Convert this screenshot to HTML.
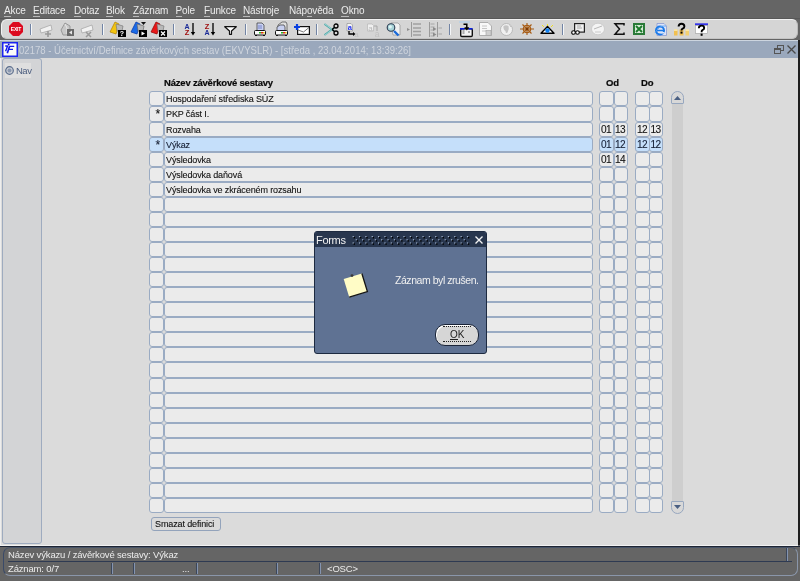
<!DOCTYPE html>
<html><head><meta charset="utf-8"><style>
*{box-sizing:border-box;margin:0;padding:0}
html,body{width:800px;height:581px;overflow:hidden;background:#656565;font-family:"Liberation Sans",sans-serif}
body{position:relative}
#root{position:absolute;left:0;top:0;width:800px;height:581px;will-change:transform}
.a{position:absolute}
.ic{position:absolute;overflow:visible}
.mn{position:absolute;top:5px;font-size:10px;color:#ececec;white-space:nowrap;line-height:12px;letter-spacing:-0.15px}
.mn u{text-decoration:none;border-bottom:1px solid #b8b8b8;display:inline-block;line-height:10px}
#toolbar{position:absolute;left:1px;top:19px;width:797px;height:20px;background:#d5d5d5;border-radius:6px;border:1px solid #f2f2f2;border-right-color:#bcbcbc;border-bottom-color:#c4c4c4}
#win{position:absolute;left:0;top:40px;width:798px;height:505px;background:#dbdbdb;border-top:1px solid #cdd5df;border-left:1px solid #eeeeee}
#title{position:absolute;left:-1px;top:0;width:798px;height:17px;background:#9aa8bc}
#title .t{position:absolute;left:19px;top:2.5px;font-size:10.5px;color:#cfd5de;white-space:nowrap;line-height:12px;transform:scaleX(0.91);transform-origin:0 0}
#nav{position:absolute;left:2px;top:58px;width:40px;height:486px;background:#d3d4d6;border:1px solid #9eabbf;border-radius:3px}
.f{position:absolute;background:#ebebeb;border:1px solid #9aabc3;border-radius:3px}
.f.s{background:#c5dffa}
.tx{position:absolute;font-size:9px;color:#111;white-space:nowrap;line-height:11px;letter-spacing:-0.12px;-webkit-text-stroke:0.1px #111}
.tx.s{color:#16223c}
.dg{font-size:10.1px;letter-spacing:-0.6px}
.hd{position:absolute;font-size:9.5px;font-weight:bold;color:#0a0a0a;white-space:nowrap;line-height:11px;letter-spacing:-0.2px;-webkit-text-stroke:0.2px #0a0a0a}
.st{position:absolute;font-size:9.5px;color:#ececec;white-space:nowrap;line-height:11px;letter-spacing:-0.16px}
.vs{position:absolute;top:563px;width:2px;height:11px;background:#8494b0;border-left:1px solid #3b465a}
</style></head><body><div id="root">
<div class="mn" style="left:4px"><u>A</u>kce</div>
<div class="mn" style="left:33px"><u>E</u>ditace</div>
<div class="mn" style="left:74px"><u>D</u>otaz</div>
<div class="mn" style="left:106px"><u>B</u>lok</div>
<div class="mn" style="left:133px"><u>Z</u>áznam</div>
<div class="mn" style="left:175.5px"><u>P</u>ole</div>
<div class="mn" style="left:204px"><u>F</u>unkce</div>
<div class="mn" style="left:243px"><u>N</u>ástroje</div>
<div class="mn" style="left:289px">Náp<u>o</u>věda</div>
<div class="mn" style="left:341px"><u>O</u>kno</div>
<div class="a" style="left:0;top:18px;width:800px;height:1px;background:#585858"></div><div id="toolbar"></div>
<svg class="ic" style="left:9px;top:22px" width="14" height="14" viewBox="0 0 14 14"><polygon points="4,0 10,0 14,4 14,10 10,14 4,14 0,10 0,4" fill="#dc0a1e"/><text x="7" y="9.2" font-family="Liberation Sans" font-weight="bold" font-size="5" fill="#fff" text-anchor="middle" letter-spacing="-0.2">EXIT</text></svg>
<svg class="ic" style="left:30px;top:24px" width="2" height="11" viewBox="0 0 2 11"><rect x="0" y="0" width="1" height="11" fill="#7284a4"/><rect x="1" y="0" width="1" height="11" fill="#f4f6f8"/></svg>
<svg class="ic" style="left:39px;top:24px" width="14" height="13" viewBox="0 0 14 13"><path d="M1,5 L12,1 L13,6 L2,9 Z" fill="#f2f2f2" stroke="#a8a8a8" stroke-width="0.8"/><path d="M9,7 v6 M6,10 h6" stroke="#9a9a9a" stroke-width="1.6"/></svg>
<svg class="ic" style="left:60px;top:22px" width="14" height="14" viewBox="0 0 14 14"><path d="M1,8 L5,1 L10,4 L10,13 L3,13 Z" fill="#c8c8c8" stroke="#8a8a8a" stroke-width="0.8"/><path d="M5,2 L7,6 V12" stroke="#f0f0f0" stroke-width="0.8" fill="none"/><rect x="7" y="7" width="7" height="7" fill="#6a6a6a"/><path d="M12,8.5 L9,10.5 L12,12.5Z" fill="#e8e8e8"/></svg>
<svg class="ic" style="left:80px;top:24px" width="14" height="13" viewBox="0 0 14 13"><path d="M1,5 L12,1 L13,6 L2,9 Z" fill="#f2f2f2" stroke="#a8a8a8" stroke-width="0.8"/><path d="M6,8 l5,5 M11,8 l-5,5" stroke="#9a9a9a" stroke-width="1.5"/></svg>
<svg class="ic" style="left:102px;top:24px" width="2" height="11" viewBox="0 0 2 11"><rect x="0" y="0" width="1" height="11" fill="#7284a4"/><rect x="1" y="0" width="1" height="11" fill="#f4f6f8"/></svg>
<svg class="ic" style="left:110px;top:22px" width="16" height="15" viewBox="0 0 16 15"><path d="M0,10 L5,0 L9,2 L6,12 Z" fill="#f2c410" stroke="#b08000" stroke-width="0.7"/><path d="M6,2 L13,4 L12,9 L7,9Z" fill="#b8b8b8" stroke="#707070" stroke-width="0.6"/><rect x="8" y="8" width="8" height="7" fill="#000"/><text x="12" y="14.3" font-family="Liberation Sans" font-weight="bold" font-size="7" fill="#fff" text-anchor="middle">?</text></svg>
<svg class="ic" style="left:131px;top:22px" width="16" height="15" viewBox="0 0 16 15"><path d="M0,10 L5,0 L9,2 L6,12 Z" fill="#1a6ae8" stroke="#0030a0" stroke-width="0.7"/><path d="M6,2 L13,4 L12,9 L7,9Z" fill="#b8b8b8" stroke="#606060" stroke-width="0.6"/><path d="M10,0 h5 l-2.5,3z" fill="#111"/><rect x="8" y="8" width="8" height="7" fill="#000"/><path d="M10.5,9.5 L14,11.5 L10.5,13.5Z" fill="#fff"/></svg>
<svg class="ic" style="left:151px;top:22px" width="16" height="15" viewBox="0 0 16 15"><path d="M0,10 L5,0 L9,2 L6,12 Z" fill="#e81818" stroke="#900000" stroke-width="0.7"/><path d="M6,2 L13,4 L12,9 L7,9Z" fill="#b8b8b8" stroke="#707070" stroke-width="0.6"/><rect x="8" y="8" width="8" height="7" fill="#000"/><path d="M10,9.5 l4,4 M14,9.5 l-4,4" stroke="#fff" stroke-width="1.2"/></svg>
<svg class="ic" style="left:173px;top:24px" width="2" height="11" viewBox="0 0 2 11"><rect x="0" y="0" width="1" height="11" fill="#7284a4"/><rect x="1" y="0" width="1" height="11" fill="#f4f6f8"/></svg>
<svg class="ic" style="left:184px;top:23px" width="11" height="13" viewBox="0 0 11 13"><text x="3" y="5.6" font-family="Liberation Sans" font-weight="bold" font-size="7" fill="#1a2a98" text-anchor="middle">A</text><text x="3" y="12.2" font-family="Liberation Sans" font-weight="bold" font-size="7.5" fill="#a01010" text-anchor="middle">Z</text><path d="M9,0 V10" stroke="#000" stroke-width="1.3"/><path d="M6.8,9 L11.2,9 L9,12.5Z" fill="#000"/></svg>
<svg class="ic" style="left:204px;top:23px" width="11" height="13" viewBox="0 0 11 13"><text x="3" y="5.6" font-family="Liberation Sans" font-weight="bold" font-size="7.5" fill="#a01010" text-anchor="middle">Z</text><text x="3" y="12.2" font-family="Liberation Sans" font-weight="bold" font-size="7" fill="#1a2a98" text-anchor="middle">A</text><path d="M9,0 V10" stroke="#000" stroke-width="1.3"/><path d="M6.8,9 L11.2,9 L9,12.5Z" fill="#000"/></svg>
<svg class="ic" style="left:224px;top:26px" width="13" height="9" viewBox="0 0 13 9"><path d="M0.7,0.7 H12.3 L7.5,5 V8.3 H5.5 V5 Z" fill="#fff" stroke="#111" stroke-width="1.2" stroke-linejoin="round"/></svg>
<svg class="ic" style="left:245px;top:24px" width="2" height="11" viewBox="0 0 2 11"><rect x="0" y="0" width="1" height="11" fill="#7284a4"/><rect x="1" y="0" width="1" height="11" fill="#f4f6f8"/></svg>
<svg class="ic" style="left:254px;top:23px" width="12" height="13" viewBox="0 0 12 13"><path d="M3,0 H8 L10,2 V8 H3Z" fill="#c8d0f0" stroke="#333" stroke-width="0.7"/><path d="M4,3h4M4,5h4" stroke="#6070c0" stroke-width="0.8"/><rect x="0.5" y="7.5" width="11" height="4.5" rx="1" fill="#fafafa" stroke="#111" stroke-width="1"/><rect x="5" y="9" width="2" height="1.5" fill="#20c020"/><rect x="7" y="9" width="2" height="1.5" fill="#e02020"/><rect x="9" y="9" width="1.5" height="1.5" fill="#e0c000"/><rect x="1" y="12" width="2" height="1" fill="#111"/><rect x="9" y="12" width="2" height="1" fill="#111"/></svg>
<svg class="ic" style="left:275px;top:22px" width="13" height="14" viewBox="0 0 13 14"><path d="M3,3 L7,0 H11 L12,2 V9 H3Z" fill="#e0e0e0" stroke="#444" stroke-width="0.7"/><path d="M2,5 L5,3 H9 L10,5 V9 H2Z" fill="#c8d0f0" stroke="#333" stroke-width="0.7"/><rect x="0.5" y="8.5" width="12" height="4.5" rx="1" fill="#fafafa" stroke="#111" stroke-width="1"/><rect x="6" y="10" width="2" height="1.5" fill="#20c020"/><rect x="8" y="10" width="2" height="1.5" fill="#e02020"/><rect x="10" y="10" width="1.5" height="1.5" fill="#e0c000"/><rect x="1" y="13" width="2" height="1" fill="#111"/><rect x="10" y="13" width="2" height="1" fill="#111"/></svg>
<svg class="ic" style="left:294px;top:24px" width="16" height="11" viewBox="0 0 16 11"><rect x="3.6" y="2.6" width="11.8" height="7.8" fill="#fff" stroke="#111" stroke-width="1.2"/><path d="M4,6 L9.5,8 L15,3.5" stroke="#555" stroke-width="0.8" fill="none"/><path d="M3,0 V6 M0,3 H6" stroke="#0a40e0" stroke-width="2.2"/></svg>
<svg class="ic" style="left:316px;top:24px" width="2" height="11" viewBox="0 0 2 11"><rect x="0" y="0" width="1" height="11" fill="#7284a4"/><rect x="1" y="0" width="1" height="11" fill="#f4f6f8"/></svg>
<svg class="ic" style="left:324px;top:23px" width="15" height="13" viewBox="0 0 15 13"><path d="M0.5,1 L10,8 M0.5,12 L10,5" stroke="#4aa8a8" stroke-width="1.6"/><path d="M1,1 L9,7 M1,12 L9,6" stroke="#d8f0f0" stroke-width="0.6"/><circle cx="12" cy="3" r="2" fill="none" stroke="#000" stroke-width="1.3"/><circle cx="12" cy="10" r="2" fill="none" stroke="#000" stroke-width="1.3"/><path d="M8,6.5 L10.5,4.5 M8,6.5 L10.5,8.5" stroke="#000" stroke-width="1.3"/></svg>
<svg class="ic" style="left:346px;top:23px" width="13" height="14" viewBox="0 0 13 14"><path d="M1,0.5 H5 L6.5,2 V8 H1Z" fill="#f4f4f4" stroke="#888" stroke-width="0.6"/><text x="3.8" y="7.2" font-family="Liberation Sans" font-weight="bold" font-size="7.5" fill="#2030f0" text-anchor="middle">a</text><path d="M3,8 V11 H7" stroke="#000" stroke-width="1.4" fill="none"/><path d="M7,9 L9.5,11 L7,13Z" fill="#000"/><text x="10.5" y="13.8" font-family="Liberation Sans" font-size="8" fill="#c0c0c0" text-anchor="middle">a</text></svg>
<svg class="ic" style="left:367px;top:23px" width="13" height="14" viewBox="0 0 13 14"><path d="M0.5,1 H5 L6.5,2.5 V8 H0.5Z" fill="#f0f0f0" stroke="#b0b0b0" stroke-width="0.6"/><text x="3.5" y="7.5" font-family="Liberation Sans" font-size="8" fill="#b8b8b8" text-anchor="middle">a</text><path d="M7,3 H10 V8" stroke="#a8a8a8" stroke-width="1" fill="none"/><text x="10" y="14" font-family="Liberation Sans" font-size="8.5" fill="#c0c0c0" text-anchor="middle">a</text></svg>
<svg class="ic" style="left:386px;top:22px" width="15" height="15" viewBox="0 0 15 15"><path d="M5,1 H12 L14,3 V13 H7Z" fill="#f0f0f0" stroke="#909090" stroke-width="0.7"/><path d="M8,9 L12.5,13.5" stroke="#1a6ad8" stroke-width="2.4"/><circle cx="5" cy="5.5" r="3.8" fill="#a8d4d8" stroke="#2a3a50" stroke-width="1.1"/><circle cx="4.3" cy="4.8" r="1.6" fill="#e0f4f4"/></svg>
<svg class="ic" style="left:407px;top:22px" width="14" height="15" viewBox="0 0 14 15"><path d="M4.5,0 V15" stroke="#9a9a9a" stroke-width="1"/><path d="M6,2h8 M6,6h8 M6,9.5h8 M6,13h8" stroke="#a0a0a0" stroke-width="1.4"/><path d="M0,6 L3,7.5 L0,9Z" fill="#909090"/></svg>
<svg class="ic" style="left:428px;top:22px" width="14" height="15" viewBox="0 0 14 15"><path d="M1.5,0 V15 M9.5,0 V15" stroke="#9a9a9a" stroke-width="1"/><path d="M2.5,2h4 M2.5,5h4 M2.5,8h4 M2.5,11h4 M2.5,14h4 M10.5,6h3.5 M10.5,12h3.5" stroke="#a8a8a8" stroke-width="1.2"/><path d="M5,5 L8.5,7 L5,9Z M5,10.5 L8.5,12.5 L5,14.5Z" fill="#8c8c8c"/></svg>
<svg class="ic" style="left:449px;top:24px" width="2" height="11" viewBox="0 0 2 11"><rect x="0" y="0" width="1" height="11" fill="#7284a4"/><rect x="1" y="0" width="1" height="11" fill="#f4f6f8"/></svg>
<svg class="ic" style="left:459px;top:21px" width="14" height="16" viewBox="0 0 14 16"><rect x="0" y="0.5" width="11" height="1" fill="#a8d0f0"/><rect x="1.7" y="7.7" width="11.6" height="7.8" rx="1.2" fill="#f4f4f4" stroke="#111" stroke-width="1.4"/><rect x="1" y="7" width="4.5" height="1.6" fill="#0a20e0"/><rect x="9.5" y="7" width="4" height="1.6" fill="#0a20e0"/><path d="M3.5,10 h2 M3.5,12 h2 M9,11 h2" stroke="#555" stroke-width="0.9"/><path d="M4.5,3.2 H7.8 V7" stroke="#000" stroke-width="1.5" fill="none"/><path d="M5.3,6.3 L10.3,6.3 L7.8,9.5Z" fill="#000"/></svg>
<svg class="ic" style="left:479px;top:22px" width="13" height="14" viewBox="0 0 13 14"><path d="M0.5,0.5 H9 L12.5,4 V13.5 H0.5Z" fill="#f8f8f8" stroke="#a8a8a8" stroke-width="0.9"/><path d="M3,4h5 M3,6.5h5 M3,9h4" stroke="#c0c0c0" stroke-width="0.9"/><rect x="7" y="8.5" width="5" height="5" fill="#d0d0d0" stroke="#a0a0a0" stroke-width="0.6"/></svg>
<svg class="ic" style="left:500px;top:23px" width="13" height="13" viewBox="0 0 13 13"><circle cx="6.5" cy="6.5" r="6" fill="#f0f0f0" stroke="#b0b0b0" stroke-width="0.8"/><path d="M3.5,3 Q6,1.5 8.5,3 Q9.5,6 7.5,9.5 Q5.5,11 5.5,8 Q3,6.5 3.5,3Z" fill="#c4c4c4"/><path d="M9.5,2.5 L11,4" stroke="#c4c4c4" stroke-width="1"/></svg>
<svg class="ic" style="left:520px;top:23px" width="14" height="12" viewBox="0 0 14 12"><circle cx="7" cy="6" r="3.6" fill="none" stroke="#a85c14" stroke-width="1.4"/><path d="M0,6 H14 M7,0 V12 M2.5,1.5 L11.5,10.5 M11.5,1.5 L2.5,10.5" stroke="#a85c14" stroke-width="1.1"/><circle cx="7" cy="6" r="1.2" fill="#7a3a08"/></svg>
<svg class="ic" style="left:540px;top:24px" width="15" height="10" viewBox="0 0 15 10"><path d="M2,1 L4,3 M7.5,0 V2 M13,1 L11,3" stroke="#f0e020" stroke-width="1"/><path d="M1,9.2 L7.5,2.5 L14,9.2Z" fill="#fff" stroke="#000" stroke-width="1.4" stroke-linejoin="round"/><circle cx="7.5" cy="6.5" r="2.2" fill="#1080f0"/></svg>
<svg class="ic" style="left:562px;top:24px" width="2" height="11" viewBox="0 0 2 11"><rect x="0" y="0" width="1" height="11" fill="#7284a4"/><rect x="1" y="0" width="1" height="11" fill="#f4f6f8"/></svg>
<svg class="ic" style="left:571px;top:23px" width="14" height="12" viewBox="0 0 14 12"><rect x="3.6" y="0.6" width="9.8" height="8.5" fill="#f0f0f0" stroke="#222" stroke-width="1.2"/><path d="M6,3h4 M6,5h5" stroke="#999" stroke-width="0.8"/><circle cx="2.5" cy="9.5" r="1.8" fill="#fff" stroke="#000" stroke-width="1.1"/><circle cx="6.5" cy="9.5" r="1.8" fill="#fff" stroke="#000" stroke-width="1.1"/></svg>
<svg class="ic" style="left:591px;top:23px" width="14" height="12" viewBox="0 0 14 12"><ellipse cx="7" cy="6" rx="6.5" ry="5.8" fill="#f4f4f4" stroke="#c8c8c8" stroke-width="0.8"/><path d="M3,6 L11,3" stroke="#b8b8b8" stroke-width="1"/><path d="M4,9h6" stroke="#c0c0c0" stroke-width="0.8"/></svg>
<svg class="ic" style="left:614px;top:23px" width="11" height="12" viewBox="0 0 11 12"><path d="M10,2.5 V0.8 H1 L5.5,6 L1,11.2 H10 V9.5" fill="none" stroke="#111" stroke-width="1.5" stroke-linejoin="miter"/></svg>
<svg class="ic" style="left:633px;top:23px" width="12" height="12" viewBox="0 0 12 12"><rect x="0" y="0" width="12" height="12" fill="#2a7a38"/><rect x="2" y="2" width="8" height="8" fill="#d8ecd8"/><path d="M3,3 L9,9 M9,3 L3,9" stroke="#1a7a2a" stroke-width="1.8"/></svg>
<svg class="ic" style="left:654px;top:23px" width="13" height="13" viewBox="0 0 13 13"><path d="M3,0.5 H10 L12.5,3 V12.5 H3Z" fill="#dde4f8" stroke="#8a9ad0" stroke-width="0.8"/><circle cx="6" cy="7.5" r="4" fill="none" stroke="#1a7ae8" stroke-width="2"/><path d="M2.5,7.5 H9.5" stroke="#1a7ae8" stroke-width="1.5"/><path d="M6.5,9.8 H10.5" stroke="#dde4f8" stroke-width="1.6"/><path d="M1,10 Q5,2 12,3" fill="none" stroke="#5aa0f0" stroke-width="0.9"/></svg>
<svg class="ic" style="left:674px;top:23px" width="15" height="13" viewBox="0 0 15 13"><rect x="0" y="6.5" width="3.5" height="6" fill="#f2c050"/><rect x="0" y="6.5" width="3.5" height="1.2" fill="#fff4c0"/><rect x="5.5" y="6.5" width="4" height="6" fill="#f2c050"/><rect x="11.5" y="6.5" width="3.5" height="6" fill="#f4d070"/><rect x="11.5" y="6.5" width="3.5" height="1.2" fill="#fff4c0"/><path d="M4.6,3.6 Q4.6,0.8 7.5,0.8 Q10.4,0.8 10.4,3.4 Q10.4,5 8.3,5.8 Q7.5,6.2 7.5,7.6" fill="none" stroke="#000" stroke-width="1.9"/><rect x="6.5" y="8.6" width="2" height="2" fill="#000"/></svg>
<svg class="ic" style="left:695px;top:23px" width="13" height="14" viewBox="0 0 13 14"><rect x="0" y="0.3" width="13" height="2.2" fill="#3434e8"/><rect x="0.5" y="2.5" width="12" height="7.8" fill="#fff" stroke="#a0a0a0" stroke-width="0.6"/><path d="M3.8,5.2 Q3.8,2.6 6.5,2.6 Q9.2,2.6 9.2,5 Q9.2,6.4 7.4,7.2 Q6.6,7.6 6.6,9.2" fill="none" stroke="#000" stroke-width="1.9"/><rect x="5.6" y="10.6" width="2" height="2.2" fill="#000"/></svg>
<div id="win"><div id="title"><div class="t">02178 - Účetnictví/Definice závěrkových sestav (EKVYSLR) - [středa , 23.04.2014; 13:39:26]</div></div></div>
<svg class="ic" style="left:2px;top:42px" width="16" height="15" viewBox="0 0 16 15"><rect x="0.75" y="0.75" width="14.5" height="13.5" fill="#fbfbf8" stroke="#1c24f0" stroke-width="1.5"/><circle cx="6.7" cy="2.5" r="0.9" fill="#0a10c0"/><path d="M3.2,4 H5.6 L3.6,9.2" fill="none" stroke="#1018f0" stroke-width="1.4" stroke-linejoin="round"/><path d="M7.6,4.3 L5.3,11.3" stroke="#1018f0" stroke-width="1.7"/><path d="M7.2,4.3 H12.2 M6.6,7.4 H11" stroke="#1018f0" stroke-width="1.3"/></svg>
<svg class="ic" style="left:774px;top:45px" width="10" height="9" viewBox="0 0 10 9"><rect x="3.5" y="0.5" width="6" height="5" fill="none" stroke="#555" stroke-width="1"/><rect x="0.5" y="3.5" width="6" height="5" fill="#9dabbf" stroke="#555" stroke-width="1"/><rect x="0.5" y="3.5" width="6" height="1.5" fill="#555"/></svg><svg class="ic" style="left:787px;top:45px" width="9" height="9" viewBox="0 0 9 9"><path d="M0.5,0.5 L8.5,8.5 M8.5,0.5 L0.5,8.5" stroke="#4a4a4a" stroke-width="1.3"/></svg>
<div class="a" style="left:798px;top:40px;width:2px;height:505px;background:#1e1e1e"></div>
<div id="nav"></div>
<div class="a" style="left:5px;top:63px;width:26px;height:15px;background:#dfdfdf"></div><svg class="ic" style="left:5px;top:66px" width="9" height="9" viewBox="0 0 9 9"><circle cx="4.5" cy="4.5" r="3.8" fill="#c8ccd4" stroke="#5a6d8c" stroke-width="1.2"/><circle cx="4.5" cy="4.5" r="2" fill="#8a98b0"/></svg><div class="a" style="left:16px;top:65px;font-size:9.5px;color:#4a5c7e;line-height:11px;letter-spacing:-0.5px">Nav</div>
<div class="hd" style="left:164px;top:76.5px">Název závěrkové sestavy</div>
<div class="hd" style="left:606px;top:76.5px">Od</div>
<div class="hd" style="left:641px;top:76.5px">Do</div>
<div class="f" style="left:149px;top:91px;width:15px;height:15px"></div><div class="f" style="left:164px;top:91px;width:429px;height:15px"></div><div class="f" style="left:599px;top:91px;width:15px;height:15px"></div><div class="f" style="left:614px;top:91px;width:14px;height:15px"></div><div class="f" style="left:635px;top:91px;width:15px;height:15px"></div><div class="f" style="left:649px;top:91px;width:14px;height:15px"></div>
<div class="tx" style="left:166px;top:94px">Hospodaření střediska SÚZ</div>
<div class="f" style="left:149px;top:106px;width:15px;height:16px"></div><div class="f" style="left:164px;top:106px;width:429px;height:16px"></div><div class="f" style="left:599px;top:106px;width:15px;height:16px"></div><div class="f" style="left:614px;top:106px;width:14px;height:16px"></div><div class="f" style="left:635px;top:106px;width:15px;height:16px"></div><div class="f" style="left:649px;top:106px;width:14px;height:16px"></div>
<div class="tx" style="left:166px;top:109px">PKP část I.</div><div class="tx" style="left:155.5px;top:107.5px;font-size:12px;line-height:12px">*</div>
<div class="f" style="left:149px;top:122px;width:15px;height:15px"></div><div class="f" style="left:164px;top:122px;width:429px;height:15px"></div><div class="f" style="left:599px;top:122px;width:15px;height:15px"></div><div class="f" style="left:614px;top:122px;width:14px;height:15px"></div><div class="f" style="left:635px;top:122px;width:15px;height:15px"></div><div class="f" style="left:649px;top:122px;width:14px;height:15px"></div>
<div class="tx" style="left:166px;top:125px">Rozvaha</div><div class="tx dg" style="left:601px;top:124px">01</div><div class="tx dg" style="left:615px;top:124px">13</div><div class="tx dg" style="left:637px;top:124px">12</div><div class="tx dg" style="left:650.5px;top:124px">13</div>
<div class="f s" style="left:149px;top:137px;width:15px;height:15px"></div><div class="f s" style="left:164px;top:137px;width:429px;height:15px"></div><div class="f s" style="left:599px;top:137px;width:15px;height:15px"></div><div class="f s" style="left:614px;top:137px;width:14px;height:15px"></div><div class="f s" style="left:635px;top:137px;width:15px;height:15px"></div><div class="f s" style="left:649px;top:137px;width:14px;height:15px"></div>
<div class="tx s" style="left:166px;top:140px">Výkaz</div><div class="tx s" style="left:155.5px;top:138.5px;font-size:12px;line-height:12px">*</div><div class="tx s dg" style="left:601px;top:139px">01</div><div class="tx s dg" style="left:615px;top:139px">12</div><div class="tx s dg" style="left:637px;top:139px">12</div><div class="tx s dg" style="left:650.5px;top:139px">12</div>
<div class="f" style="left:149px;top:152px;width:15px;height:15px"></div><div class="f" style="left:164px;top:152px;width:429px;height:15px"></div><div class="f" style="left:599px;top:152px;width:15px;height:15px"></div><div class="f" style="left:614px;top:152px;width:14px;height:15px"></div><div class="f" style="left:635px;top:152px;width:15px;height:15px"></div><div class="f" style="left:649px;top:152px;width:14px;height:15px"></div>
<div class="tx" style="left:166px;top:155px">Výsledovka</div><div class="tx dg" style="left:601px;top:154px">01</div><div class="tx dg" style="left:615px;top:154px">14</div>
<div class="f" style="left:149px;top:167px;width:15px;height:15px"></div><div class="f" style="left:164px;top:167px;width:429px;height:15px"></div><div class="f" style="left:599px;top:167px;width:15px;height:15px"></div><div class="f" style="left:614px;top:167px;width:14px;height:15px"></div><div class="f" style="left:635px;top:167px;width:15px;height:15px"></div><div class="f" style="left:649px;top:167px;width:14px;height:15px"></div>
<div class="tx" style="left:166px;top:170px">Výsledovka daňová</div>
<div class="f" style="left:149px;top:182px;width:15px;height:15px"></div><div class="f" style="left:164px;top:182px;width:429px;height:15px"></div><div class="f" style="left:599px;top:182px;width:15px;height:15px"></div><div class="f" style="left:614px;top:182px;width:14px;height:15px"></div><div class="f" style="left:635px;top:182px;width:15px;height:15px"></div><div class="f" style="left:649px;top:182px;width:14px;height:15px"></div>
<div class="tx" style="left:166px;top:185px">Výsledovka ve zkráceném rozsahu</div>
<div class="f" style="left:149px;top:197px;width:15px;height:15px"></div><div class="f" style="left:164px;top:197px;width:429px;height:15px"></div><div class="f" style="left:599px;top:197px;width:15px;height:15px"></div><div class="f" style="left:614px;top:197px;width:14px;height:15px"></div><div class="f" style="left:635px;top:197px;width:15px;height:15px"></div><div class="f" style="left:649px;top:197px;width:14px;height:15px"></div>

<div class="f" style="left:149px;top:212px;width:15px;height:15px"></div><div class="f" style="left:164px;top:212px;width:429px;height:15px"></div><div class="f" style="left:599px;top:212px;width:15px;height:15px"></div><div class="f" style="left:614px;top:212px;width:14px;height:15px"></div><div class="f" style="left:635px;top:212px;width:15px;height:15px"></div><div class="f" style="left:649px;top:212px;width:14px;height:15px"></div>

<div class="f" style="left:149px;top:227px;width:15px;height:15px"></div><div class="f" style="left:164px;top:227px;width:429px;height:15px"></div><div class="f" style="left:599px;top:227px;width:15px;height:15px"></div><div class="f" style="left:614px;top:227px;width:14px;height:15px"></div><div class="f" style="left:635px;top:227px;width:15px;height:15px"></div><div class="f" style="left:649px;top:227px;width:14px;height:15px"></div>

<div class="f" style="left:149px;top:242px;width:15px;height:15px"></div><div class="f" style="left:164px;top:242px;width:429px;height:15px"></div><div class="f" style="left:599px;top:242px;width:15px;height:15px"></div><div class="f" style="left:614px;top:242px;width:14px;height:15px"></div><div class="f" style="left:635px;top:242px;width:15px;height:15px"></div><div class="f" style="left:649px;top:242px;width:14px;height:15px"></div>

<div class="f" style="left:149px;top:257px;width:15px;height:15px"></div><div class="f" style="left:164px;top:257px;width:429px;height:15px"></div><div class="f" style="left:599px;top:257px;width:15px;height:15px"></div><div class="f" style="left:614px;top:257px;width:14px;height:15px"></div><div class="f" style="left:635px;top:257px;width:15px;height:15px"></div><div class="f" style="left:649px;top:257px;width:14px;height:15px"></div>

<div class="f" style="left:149px;top:272px;width:15px;height:15px"></div><div class="f" style="left:164px;top:272px;width:429px;height:15px"></div><div class="f" style="left:599px;top:272px;width:15px;height:15px"></div><div class="f" style="left:614px;top:272px;width:14px;height:15px"></div><div class="f" style="left:635px;top:272px;width:15px;height:15px"></div><div class="f" style="left:649px;top:272px;width:14px;height:15px"></div>

<div class="f" style="left:149px;top:287px;width:15px;height:15px"></div><div class="f" style="left:164px;top:287px;width:429px;height:15px"></div><div class="f" style="left:599px;top:287px;width:15px;height:15px"></div><div class="f" style="left:614px;top:287px;width:14px;height:15px"></div><div class="f" style="left:635px;top:287px;width:15px;height:15px"></div><div class="f" style="left:649px;top:287px;width:14px;height:15px"></div>

<div class="f" style="left:149px;top:302px;width:15px;height:15px"></div><div class="f" style="left:164px;top:302px;width:429px;height:15px"></div><div class="f" style="left:599px;top:302px;width:15px;height:15px"></div><div class="f" style="left:614px;top:302px;width:14px;height:15px"></div><div class="f" style="left:635px;top:302px;width:15px;height:15px"></div><div class="f" style="left:649px;top:302px;width:14px;height:15px"></div>

<div class="f" style="left:149px;top:317px;width:15px;height:15px"></div><div class="f" style="left:164px;top:317px;width:429px;height:15px"></div><div class="f" style="left:599px;top:317px;width:15px;height:15px"></div><div class="f" style="left:614px;top:317px;width:14px;height:15px"></div><div class="f" style="left:635px;top:317px;width:15px;height:15px"></div><div class="f" style="left:649px;top:317px;width:14px;height:15px"></div>

<div class="f" style="left:149px;top:332px;width:15px;height:15px"></div><div class="f" style="left:164px;top:332px;width:429px;height:15px"></div><div class="f" style="left:599px;top:332px;width:15px;height:15px"></div><div class="f" style="left:614px;top:332px;width:14px;height:15px"></div><div class="f" style="left:635px;top:332px;width:15px;height:15px"></div><div class="f" style="left:649px;top:332px;width:14px;height:15px"></div>

<div class="f" style="left:149px;top:347px;width:15px;height:15px"></div><div class="f" style="left:164px;top:347px;width:429px;height:15px"></div><div class="f" style="left:599px;top:347px;width:15px;height:15px"></div><div class="f" style="left:614px;top:347px;width:14px;height:15px"></div><div class="f" style="left:635px;top:347px;width:15px;height:15px"></div><div class="f" style="left:649px;top:347px;width:14px;height:15px"></div>

<div class="f" style="left:149px;top:362px;width:15px;height:16px"></div><div class="f" style="left:164px;top:362px;width:429px;height:16px"></div><div class="f" style="left:599px;top:362px;width:15px;height:16px"></div><div class="f" style="left:614px;top:362px;width:14px;height:16px"></div><div class="f" style="left:635px;top:362px;width:15px;height:16px"></div><div class="f" style="left:649px;top:362px;width:14px;height:16px"></div>

<div class="f" style="left:149px;top:378px;width:15px;height:15px"></div><div class="f" style="left:164px;top:378px;width:429px;height:15px"></div><div class="f" style="left:599px;top:378px;width:15px;height:15px"></div><div class="f" style="left:614px;top:378px;width:14px;height:15px"></div><div class="f" style="left:635px;top:378px;width:15px;height:15px"></div><div class="f" style="left:649px;top:378px;width:14px;height:15px"></div>

<div class="f" style="left:149px;top:393px;width:15px;height:15px"></div><div class="f" style="left:164px;top:393px;width:429px;height:15px"></div><div class="f" style="left:599px;top:393px;width:15px;height:15px"></div><div class="f" style="left:614px;top:393px;width:14px;height:15px"></div><div class="f" style="left:635px;top:393px;width:15px;height:15px"></div><div class="f" style="left:649px;top:393px;width:14px;height:15px"></div>

<div class="f" style="left:149px;top:408px;width:15px;height:15px"></div><div class="f" style="left:164px;top:408px;width:429px;height:15px"></div><div class="f" style="left:599px;top:408px;width:15px;height:15px"></div><div class="f" style="left:614px;top:408px;width:14px;height:15px"></div><div class="f" style="left:635px;top:408px;width:15px;height:15px"></div><div class="f" style="left:649px;top:408px;width:14px;height:15px"></div>

<div class="f" style="left:149px;top:423px;width:15px;height:15px"></div><div class="f" style="left:164px;top:423px;width:429px;height:15px"></div><div class="f" style="left:599px;top:423px;width:15px;height:15px"></div><div class="f" style="left:614px;top:423px;width:14px;height:15px"></div><div class="f" style="left:635px;top:423px;width:15px;height:15px"></div><div class="f" style="left:649px;top:423px;width:14px;height:15px"></div>

<div class="f" style="left:149px;top:438px;width:15px;height:15px"></div><div class="f" style="left:164px;top:438px;width:429px;height:15px"></div><div class="f" style="left:599px;top:438px;width:15px;height:15px"></div><div class="f" style="left:614px;top:438px;width:14px;height:15px"></div><div class="f" style="left:635px;top:438px;width:15px;height:15px"></div><div class="f" style="left:649px;top:438px;width:14px;height:15px"></div>

<div class="f" style="left:149px;top:453px;width:15px;height:15px"></div><div class="f" style="left:164px;top:453px;width:429px;height:15px"></div><div class="f" style="left:599px;top:453px;width:15px;height:15px"></div><div class="f" style="left:614px;top:453px;width:14px;height:15px"></div><div class="f" style="left:635px;top:453px;width:15px;height:15px"></div><div class="f" style="left:649px;top:453px;width:14px;height:15px"></div>

<div class="f" style="left:149px;top:468px;width:15px;height:15px"></div><div class="f" style="left:164px;top:468px;width:429px;height:15px"></div><div class="f" style="left:599px;top:468px;width:15px;height:15px"></div><div class="f" style="left:614px;top:468px;width:14px;height:15px"></div><div class="f" style="left:635px;top:468px;width:15px;height:15px"></div><div class="f" style="left:649px;top:468px;width:14px;height:15px"></div>

<div class="f" style="left:149px;top:483px;width:15px;height:15px"></div><div class="f" style="left:164px;top:483px;width:429px;height:15px"></div><div class="f" style="left:599px;top:483px;width:15px;height:15px"></div><div class="f" style="left:614px;top:483px;width:14px;height:15px"></div><div class="f" style="left:635px;top:483px;width:15px;height:15px"></div><div class="f" style="left:649px;top:483px;width:14px;height:15px"></div>

<div class="f" style="left:149px;top:498px;width:15px;height:15px"></div><div class="f" style="left:164px;top:498px;width:429px;height:15px"></div><div class="f" style="left:599px;top:498px;width:15px;height:15px"></div><div class="f" style="left:614px;top:498px;width:14px;height:15px"></div><div class="f" style="left:635px;top:498px;width:15px;height:15px"></div><div class="f" style="left:649px;top:498px;width:14px;height:15px"></div>

<div class="a" style="left:672px;top:103px;width:11px;height:398px;background:#cecece"></div><div class="a" style="left:671px;top:91px;width:13px;height:13px;background:#d8d8d8;border:1px solid #97a7bf;border-radius:6.5px 6.5px 1px 1px"></div><svg class="ic" style="left:674px;top:96px" width="7" height="4" viewBox="0 0 7 4"><path d="M0,4 L3.5,0 L7,4Z" fill="#4a5f82"/></svg><div class="a" style="left:671px;top:501px;width:13px;height:13px;background:#d8d8d8;border:1px solid #97a7bf;border-radius:1px 1px 6.5px 6.5px"></div><svg class="ic" style="left:674px;top:505px" width="7" height="4" viewBox="0 0 7 4"><path d="M0,0 L3.5,4 L7,0Z" fill="#4a5f82"/></svg>
<div class="a" style="left:151px;top:517px;width:70px;height:14px;background:#dadada;border:1px solid #93a3bb;border-radius:3px"></div><div class="tx" style="left:155px;top:519px">Smazat definici</div>
<div class="a" style="left:0;top:545px;width:798px;height:1px;background:#f2f2f2"></div><div class="a" style="left:0;top:546px;width:800px;height:1px;background:#1e2534"></div><div class="a" style="left:3px;top:547px;width:795px;height:29px;border:1px solid #8a96aa;border-top-color:#485468;border-left-color:#3a4a68;border-radius:7px"></div><div class="a" style="left:8px;top:561px;width:784px;height:1px;background:#2e3a52"></div><div class="st" style="left:8px;top:548.5px">Název výkazu / závěrkové sestavy: Výkaz</div><div class="st" style="left:8px;top:563px">Záznam: 0/7</div><div class="vs" style="left:111px"></div><div class="vs" style="left:133px"></div><div class="vs" style="left:196px"></div><div class="vs" style="left:276px"></div><div class="vs" style="left:319px"></div><div class="vs" style="left:786px;top:548px;height:13px"></div><div class="st" style="left:182px;top:563px">...</div><div class="st" style="left:327px;top:563px">&lt;OSC&gt;</div>
<div class="a" style="left:314px;top:231px;width:173px;height:123px;background:#5f7293;border:1px solid #1d2a40;border-radius:3px;overflow:hidden"><div class="a" style="left:0;top:0;width:171px;height:15px;background:#28364e"></div></div>
<div class="a" style="left:316px;top:233.5px;font-size:11px;color:#f2f2f2;line-height:12px;letter-spacing:-0.3px">Forms</div><svg class="ic" style="left:475px;top:236px" width="8" height="8" viewBox="0 0 8 8"><path d="M0.5,0.5 L7.5,7.5 M7.5,0.5 L0.5,7.5" stroke="#f4f4f4" stroke-width="1.4"/></svg><svg class="ic" style="left:351px;top:235px" width="120" height="12" viewBox="0 0 120 12"><rect x="1.60" y="1.00" width="1.2" height="1.2" fill="#a8b8d0"/><rect x="2.60" y="2.00" width="1.4" height="1.4" fill="#000"/><rect x="7.95" y="1.00" width="1.2" height="1.2" fill="#a8b8d0"/><rect x="8.95" y="2.00" width="1.4" height="1.4" fill="#000"/><rect x="14.30" y="1.00" width="1.2" height="1.2" fill="#a8b8d0"/><rect x="15.30" y="2.00" width="1.4" height="1.4" fill="#000"/><rect x="20.65" y="1.00" width="1.2" height="1.2" fill="#a8b8d0"/><rect x="21.65" y="2.00" width="1.4" height="1.4" fill="#000"/><rect x="27.00" y="1.00" width="1.2" height="1.2" fill="#a8b8d0"/><rect x="28.00" y="2.00" width="1.4" height="1.4" fill="#000"/><rect x="33.35" y="1.00" width="1.2" height="1.2" fill="#a8b8d0"/><rect x="34.35" y="2.00" width="1.4" height="1.4" fill="#000"/><rect x="39.70" y="1.00" width="1.2" height="1.2" fill="#a8b8d0"/><rect x="40.70" y="2.00" width="1.4" height="1.4" fill="#000"/><rect x="46.05" y="1.00" width="1.2" height="1.2" fill="#a8b8d0"/><rect x="47.05" y="2.00" width="1.4" height="1.4" fill="#000"/><rect x="52.40" y="1.00" width="1.2" height="1.2" fill="#a8b8d0"/><rect x="53.40" y="2.00" width="1.4" height="1.4" fill="#000"/><rect x="58.75" y="1.00" width="1.2" height="1.2" fill="#a8b8d0"/><rect x="59.75" y="2.00" width="1.4" height="1.4" fill="#000"/><rect x="65.10" y="1.00" width="1.2" height="1.2" fill="#a8b8d0"/><rect x="66.10" y="2.00" width="1.4" height="1.4" fill="#000"/><rect x="71.45" y="1.00" width="1.2" height="1.2" fill="#a8b8d0"/><rect x="72.45" y="2.00" width="1.4" height="1.4" fill="#000"/><rect x="77.80" y="1.00" width="1.2" height="1.2" fill="#a8b8d0"/><rect x="78.80" y="2.00" width="1.4" height="1.4" fill="#000"/><rect x="84.15" y="1.00" width="1.2" height="1.2" fill="#a8b8d0"/><rect x="85.15" y="2.00" width="1.4" height="1.4" fill="#000"/><rect x="90.50" y="1.00" width="1.2" height="1.2" fill="#a8b8d0"/><rect x="91.50" y="2.00" width="1.4" height="1.4" fill="#000"/><rect x="96.85" y="1.00" width="1.2" height="1.2" fill="#a8b8d0"/><rect x="97.85" y="2.00" width="1.4" height="1.4" fill="#000"/><rect x="103.20" y="1.00" width="1.2" height="1.2" fill="#a8b8d0"/><rect x="104.20" y="2.00" width="1.4" height="1.4" fill="#000"/><rect x="109.55" y="1.00" width="1.2" height="1.2" fill="#a8b8d0"/><rect x="110.55" y="2.00" width="1.4" height="1.4" fill="#000"/><rect x="115.90" y="1.00" width="1.2" height="1.2" fill="#a8b8d0"/><rect x="116.90" y="2.00" width="1.4" height="1.4" fill="#000"/><rect x="4.70" y="4.20" width="1.2" height="1.2" fill="#a8b8d0"/><rect x="5.70" y="5.20" width="1.4" height="1.4" fill="#000"/><rect x="11.05" y="4.20" width="1.2" height="1.2" fill="#a8b8d0"/><rect x="12.05" y="5.20" width="1.4" height="1.4" fill="#000"/><rect x="17.40" y="4.20" width="1.2" height="1.2" fill="#a8b8d0"/><rect x="18.40" y="5.20" width="1.4" height="1.4" fill="#000"/><rect x="23.75" y="4.20" width="1.2" height="1.2" fill="#a8b8d0"/><rect x="24.75" y="5.20" width="1.4" height="1.4" fill="#000"/><rect x="30.10" y="4.20" width="1.2" height="1.2" fill="#a8b8d0"/><rect x="31.10" y="5.20" width="1.4" height="1.4" fill="#000"/><rect x="36.45" y="4.20" width="1.2" height="1.2" fill="#a8b8d0"/><rect x="37.45" y="5.20" width="1.4" height="1.4" fill="#000"/><rect x="42.80" y="4.20" width="1.2" height="1.2" fill="#a8b8d0"/><rect x="43.80" y="5.20" width="1.4" height="1.4" fill="#000"/><rect x="49.15" y="4.20" width="1.2" height="1.2" fill="#a8b8d0"/><rect x="50.15" y="5.20" width="1.4" height="1.4" fill="#000"/><rect x="55.50" y="4.20" width="1.2" height="1.2" fill="#a8b8d0"/><rect x="56.50" y="5.20" width="1.4" height="1.4" fill="#000"/><rect x="61.85" y="4.20" width="1.2" height="1.2" fill="#a8b8d0"/><rect x="62.85" y="5.20" width="1.4" height="1.4" fill="#000"/><rect x="68.20" y="4.20" width="1.2" height="1.2" fill="#a8b8d0"/><rect x="69.20" y="5.20" width="1.4" height="1.4" fill="#000"/><rect x="74.55" y="4.20" width="1.2" height="1.2" fill="#a8b8d0"/><rect x="75.55" y="5.20" width="1.4" height="1.4" fill="#000"/><rect x="80.90" y="4.20" width="1.2" height="1.2" fill="#a8b8d0"/><rect x="81.90" y="5.20" width="1.4" height="1.4" fill="#000"/><rect x="87.25" y="4.20" width="1.2" height="1.2" fill="#a8b8d0"/><rect x="88.25" y="5.20" width="1.4" height="1.4" fill="#000"/><rect x="93.60" y="4.20" width="1.2" height="1.2" fill="#a8b8d0"/><rect x="94.60" y="5.20" width="1.4" height="1.4" fill="#000"/><rect x="99.95" y="4.20" width="1.2" height="1.2" fill="#a8b8d0"/><rect x="100.95" y="5.20" width="1.4" height="1.4" fill="#000"/><rect x="106.30" y="4.20" width="1.2" height="1.2" fill="#a8b8d0"/><rect x="107.30" y="5.20" width="1.4" height="1.4" fill="#000"/><rect x="112.65" y="4.20" width="1.2" height="1.2" fill="#a8b8d0"/><rect x="113.65" y="5.20" width="1.4" height="1.4" fill="#000"/><rect x="1.60" y="7.40" width="1.2" height="1.2" fill="#a8b8d0"/><rect x="2.60" y="8.40" width="1.4" height="1.4" fill="#000"/><rect x="7.95" y="7.40" width="1.2" height="1.2" fill="#a8b8d0"/><rect x="8.95" y="8.40" width="1.4" height="1.4" fill="#000"/><rect x="14.30" y="7.40" width="1.2" height="1.2" fill="#a8b8d0"/><rect x="15.30" y="8.40" width="1.4" height="1.4" fill="#000"/><rect x="20.65" y="7.40" width="1.2" height="1.2" fill="#a8b8d0"/><rect x="21.65" y="8.40" width="1.4" height="1.4" fill="#000"/><rect x="27.00" y="7.40" width="1.2" height="1.2" fill="#a8b8d0"/><rect x="28.00" y="8.40" width="1.4" height="1.4" fill="#000"/><rect x="33.35" y="7.40" width="1.2" height="1.2" fill="#a8b8d0"/><rect x="34.35" y="8.40" width="1.4" height="1.4" fill="#000"/><rect x="39.70" y="7.40" width="1.2" height="1.2" fill="#a8b8d0"/><rect x="40.70" y="8.40" width="1.4" height="1.4" fill="#000"/><rect x="46.05" y="7.40" width="1.2" height="1.2" fill="#a8b8d0"/><rect x="47.05" y="8.40" width="1.4" height="1.4" fill="#000"/><rect x="52.40" y="7.40" width="1.2" height="1.2" fill="#a8b8d0"/><rect x="53.40" y="8.40" width="1.4" height="1.4" fill="#000"/><rect x="58.75" y="7.40" width="1.2" height="1.2" fill="#a8b8d0"/><rect x="59.75" y="8.40" width="1.4" height="1.4" fill="#000"/><rect x="65.10" y="7.40" width="1.2" height="1.2" fill="#a8b8d0"/><rect x="66.10" y="8.40" width="1.4" height="1.4" fill="#000"/><rect x="71.45" y="7.40" width="1.2" height="1.2" fill="#a8b8d0"/><rect x="72.45" y="8.40" width="1.4" height="1.4" fill="#000"/><rect x="77.80" y="7.40" width="1.2" height="1.2" fill="#a8b8d0"/><rect x="78.80" y="8.40" width="1.4" height="1.4" fill="#000"/><rect x="84.15" y="7.40" width="1.2" height="1.2" fill="#a8b8d0"/><rect x="85.15" y="8.40" width="1.4" height="1.4" fill="#000"/><rect x="90.50" y="7.40" width="1.2" height="1.2" fill="#a8b8d0"/><rect x="91.50" y="8.40" width="1.4" height="1.4" fill="#000"/><rect x="96.85" y="7.40" width="1.2" height="1.2" fill="#a8b8d0"/><rect x="97.85" y="8.40" width="1.4" height="1.4" fill="#000"/><rect x="103.20" y="7.40" width="1.2" height="1.2" fill="#a8b8d0"/><rect x="104.20" y="8.40" width="1.4" height="1.4" fill="#000"/><rect x="109.55" y="7.40" width="1.2" height="1.2" fill="#a8b8d0"/><rect x="110.55" y="8.40" width="1.4" height="1.4" fill="#000"/><rect x="115.90" y="7.40" width="1.2" height="1.2" fill="#a8b8d0"/><rect x="116.90" y="8.40" width="1.4" height="1.4" fill="#000"/></svg>
<svg class="ic" style="left:340px;top:270px" width="32" height="32" viewBox="0 0 32 32"><g transform="rotate(-17 15.55 15.35)"><rect x="6.05" y="5.85" width="19" height="19" fill="#fffcc6"/><path d="M25.05,5.85 V24.85 H6.05" fill="none" stroke="#151515" stroke-width="1.3"/></g><circle cx="12" cy="5.6" r="1.4" fill="#3a3a3a"/></svg><div class="a" style="left:395px;top:273.5px;font-size:10.5px;color:#f0f0f0;line-height:12px;white-space:nowrap;letter-spacing:-0.45px">Záznam byl zrušen.</div><div class="a" style="left:435px;top:323.5px;width:44px;height:22px;background:#d6d6d6;border:1.5px solid #1a2438;border-radius:10px;box-shadow:inset 1px 1px 0 #fff"></div><div class="a" style="left:443px;top:326px;width:28px;height:0;border-top:1px dotted #222"></div><div class="a" style="left:443px;top:341px;width:28px;height:0;border-top:1px dotted #222"></div><div class="a" style="left:450px;top:329px;font-size:10px;color:#222;line-height:12px"><u style="text-decoration:none;border-bottom:1px solid #222;display:inline-block;line-height:9px">O</u>K</div>
</div></body></html>
